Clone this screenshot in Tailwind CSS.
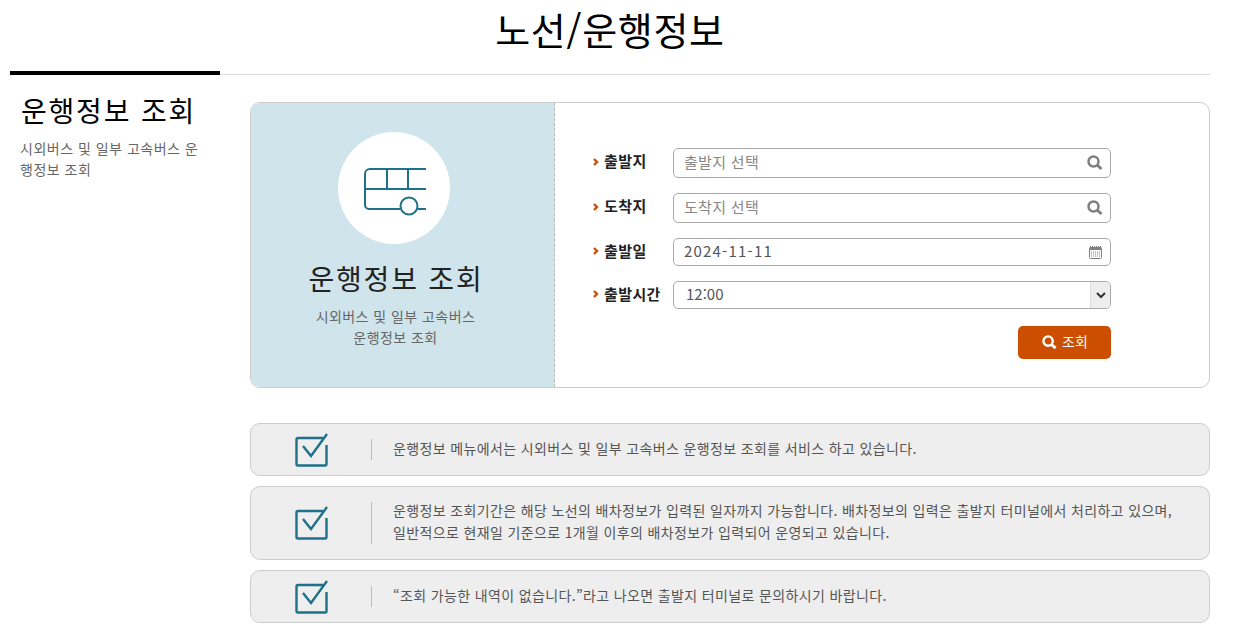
<!doctype html>
<html lang="ko">
  <head>
    <meta charset="UTF-8" />
    <title>노선/운행정보</title>
    <script src="https://cdn.jsdelivr.net/npm/@tailwindcss/browser@4"></script>
  </head>
  <body class="bg-white font-['Noto_Sans_CJK_KR','Liberation_Sans',sans-serif] text-[#666] overflow-hidden">
    <div class="w-[1200px] ml-[10px]">
      <!-- title -->
      <h1 class="h-[71px] pt-[5px] text-center text-[38px] leading-[48px] tracking-[0.7px] text-black font-normal">노선/운행정보</h1>
      <div class="h-[4px] border-b border-[#ddd]">
        <div class="w-[210px] h-[4px] bg-black"></div>
      </div>

      <div class="flex">
        <!-- side -->
        <aside class="w-[240px] shrink-0 pl-[10px] pr-[40px] pt-[17px]">
          <h2 class="ml-[1px] text-[28px] leading-[36px] text-black font-normal tracking-[1.8px] whitespace-nowrap">운행정보 조회</h2>
          <p class="mt-[10px] text-[14px] leading-[21px] tracking-[0.5px] text-[#666]">시외버스 및 일부 고속버스 운행정보 조회</p>
        </aside>

        <main class="w-[960px] pt-[27px]">
          <!-- search card -->
          <section class="flex h-[286px] border border-[#ccc] rounded-[10px] overflow-hidden">
            <div class="w-[304px] shrink-0 bg-[#cfe4eb] border-r border-dashed border-[#bbb] flex flex-col items-center pt-[29px] pr-[17px]">
              <div class="w-[112px] h-[112px] rounded-full bg-white flex items-center justify-center">
                <svg class="mt-[8px] ml-[1px]" width="62" height="48" viewBox="0 0 62 48" fill="none" stroke="#1f7089" stroke-width="2">
                  <path d="M62 1H6a5 5 0 0 0-5 5v31a4 4 0 0 0 4 4h31M54 41h8M1 21h61M23 1v20M44 1v20" />
                  <circle cx="45" cy="38" r="8.500" />
                </svg>
              </div>
              <h3 class="mt-[15px] ml-[4px] text-[28px] leading-[38px] text-[#222] font-normal tracking-[1.8px] whitespace-nowrap">운행정보 조회</h3>
              <p class="mt-[9px] ml-[3px] text-[14px] leading-[21px] tracking-[0.45px] text-center text-[#666]">시외버스 및 일부 고속버스<br />운행정보 조회</p>
            </div>

            <form class="flex-1 pl-[38px] pt-[45px]">
              <div class="w-[518px] flex flex-col">
                <div class="flex items-center h-[30px]">
                  <label class="w-[80px] shrink-0 flex items-center gap-[5px] pb-[3px] text-[15px] tracking-[0.4px] font-bold text-[#222]"><svg width="6" height="8" viewBox="0 0 6 8" fill="none" stroke="#cc4e00" stroke-width="2.400"><path d="M1 1l3 3-3 3" /></svg>출발지</label>
                  <div class="flex-1 h-full flex items-center justify-between border border-[#aaa] rounded-[5px] pl-[10px] pr-[7px] text-[15px] tracking-[0.3px] text-[#888]">
                    <span class="pb-[2px]">출발지 선택</span>
                    <svg width="16" height="16" viewBox="0 0 16 16" fill="none" stroke="#808080"><circle cx="6.500" cy="6.500" r="5" stroke-width="2.500" /><path d="M10 10l4.500 4" stroke-width="3" /></svg>
                  </div>
                </div>
                <div class="flex items-center h-[30px] mt-[15px]">
                  <label class="w-[80px] shrink-0 flex items-center gap-[5px] pb-[3px] text-[15px] tracking-[0.4px] font-bold text-[#222]"><svg width="6" height="8" viewBox="0 0 6 8" fill="none" stroke="#cc4e00" stroke-width="2.400"><path d="M1 1l3 3-3 3" /></svg>도착지</label>
                  <div class="flex-1 h-full flex items-center justify-between border border-[#aaa] rounded-[5px] pl-[10px] pr-[7px] text-[15px] tracking-[0.3px] text-[#888]">
                    <span class="pb-[2px]">도착지 선택</span>
                    <svg width="16" height="16" viewBox="0 0 16 16" fill="none" stroke="#808080"><circle cx="6.500" cy="6.500" r="5" stroke-width="2.500" /><path d="M10 10l4.500 4" stroke-width="3" /></svg>
                  </div>
                </div>
                <div class="flex items-center h-[28px] mt-[15px]">
                  <label class="w-[80px] shrink-0 flex items-center gap-[5px] pb-[2px] text-[15px] tracking-[0.4px] font-bold text-[#222]"><svg width="6" height="8" viewBox="0 0 6 8" fill="none" stroke="#cc4e00" stroke-width="2.400"><path d="M1 1l3 3-3 3" /></svg>출발일</label>
                  <div class="flex-1 h-full flex items-center justify-between border border-[#aaa] rounded-[5px] pl-[10px] pr-[8px] text-[15px] text-[#555] tracking-[1.2px]">
                    <span class="pb-[2px]">2024-11-11</span>
                    <svg width="13" height="13" viewBox="0 0 13 13" fill="none"><rect x="0.500" y="1.500" width="12" height="11" rx="1" stroke="#808080" /><path d="M1 1h11v3H1z" fill="#808080" /><path d="M1.500 0v1M3.500 0v1M5.500 0v1M7.500 0v1M9.500 0v1M11.500 0v1" stroke="#808080" /><path d="M2 6h9M2 8h9M2 10h9" stroke="#808080" stroke-dasharray="1 1" /></svg>
                  </div>
                </div>
                <div class="flex items-center h-[28px] mt-[15px]">
                  <label class="w-[80px] shrink-0 flex items-center gap-[5px] pb-[2px] text-[15px] tracking-[0.4px] font-bold text-[#222] whitespace-nowrap"><svg width="6" height="8" viewBox="0 0 6 8" fill="none" stroke="#cc4e00" stroke-width="2.400"><path d="M1 1l3 3-3 3" /></svg>출발시간</label>
                  <div class="flex-1 h-full flex items-center justify-between border border-[#aaa] rounded-[5px] overflow-hidden pl-[12px] text-[15px] text-[#555]">
                    <span class="pb-[2px]">12:00</span>
                    <span class="w-[20px] h-full bg-[#eee] border-l border-[#ddd] flex items-center justify-center">
                      <svg width="10" height="7" viewBox="0 0 10 7" fill="none" stroke="#333" stroke-width="2"><path d="M1 1l4 4 4-4" /></svg>
                    </span>
                  </div>
                </div>
                <div class="flex justify-end mt-[17px]">
                  <button type="button" class="w-[93px] h-[33px] rounded-[5px] bg-[#cc4e00] text-white text-[14px] flex items-center justify-center gap-[5px] pl-[1px]">
                    <svg width="15" height="15" viewBox="0 0 16 16" fill="none" stroke="#fff"><circle cx="6.500" cy="6.500" r="5" stroke-width="2.500" /><path d="M10 10l4.500 4" stroke-width="3" /></svg><span class="pb-[2px]">조회</span>
                  </button>
                </div>
              </div>
            </form>
          </section>

          <!-- notes -->
          <section class="mt-[35px] flex flex-col gap-[10px] text-[14px] leading-[22px] tracking-[0.36px] text-[#555]">
            <div class="h-[53px] flex items-center bg-[#eee] border border-[#ccc] rounded-[10px]">
              <div class="w-[120px] shrink-0 flex justify-center pl-[1px]">
                <svg width="34" height="34" viewBox="0 0 34 34" fill="none" stroke="#1f7089" stroke-width="2.400"><path d="M28 5H3a1.500 1.500 0 0 0-1.500 1.500V31a1.500 1.500 0 0 0 1.500 1.500h27a1.500 1.500 0 0 0 1.500-1.500V12" /><path d="M8 13l8 10L32 1" /></svg>
              </div>
              <div class="h-[21px] border-l border-[#bbb] pl-[21px]"></div>
              <p class="whitespace-nowrap pb-[3px]">운행정보 메뉴에서는 시외버스 및 일부 고속버스 운행정보 조회를 서비스 하고 있습니다.</p>
            </div>
            <div class="h-[74px] flex items-center bg-[#eee] border border-[#ccc] rounded-[10px]">
              <div class="w-[120px] shrink-0 flex justify-center pl-[1px]">
                <svg width="34" height="34" viewBox="0 0 34 34" fill="none" stroke="#1f7089" stroke-width="2.400"><path d="M28 5H3a1.500 1.500 0 0 0-1.500 1.500V31a1.500 1.500 0 0 0 1.500 1.500h27a1.500 1.500 0 0 0 1.500-1.500V12" /><path d="M8 13l8 10L32 1" /></svg>
              </div>
              <div class="h-[42px] border-l border-[#bbb] pl-[21px]"></div>
              <p class="whitespace-nowrap pb-[4px]">운행정보 조회기간은 해당 노선의 배차정보가 입력된 일자까지 가능합니다. 배차정보의 입력은 출발지 터미널에서 처리하고 있으며,<br />일반적으로 현재일 기준으로 1개월 이후의 배차정보가 입력되어 운영되고 있습니다.</p>
            </div>
            <div class="h-[53px] flex items-center bg-[#eee] border border-[#ccc] rounded-[10px]">
              <div class="w-[120px] shrink-0 flex justify-center pl-[1px]">
                <svg width="34" height="34" viewBox="0 0 34 34" fill="none" stroke="#1f7089" stroke-width="2.400"><path d="M28 5H3a1.500 1.500 0 0 0-1.500 1.500V31a1.500 1.500 0 0 0 1.500 1.500h27a1.500 1.500 0 0 0 1.500-1.500V12" /><path d="M8 13l8 10L32 1" /></svg>
              </div>
              <div class="h-[21px] border-l border-[#bbb] pl-[21px]"></div>
              <p class="whitespace-nowrap pb-[3px]">“조회 가능한 내역이 없습니다.”라고 나오면 출발지 터미널로 문의하시기 바랍니다.</p>
            </div>
          </section>
        </main>
      </div>
    </div>
  </body>
</html>
